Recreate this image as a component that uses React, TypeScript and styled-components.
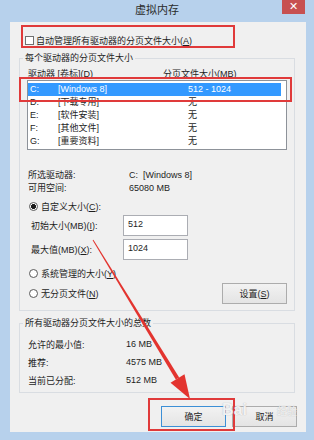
import React from 'react';
import styled, { createGlobalStyle } from 'styled-components';

const GlobalStyle = createGlobalStyle`
  html, body {
    margin: 0;
    padding: 0;
  }
  body {
    width: 314px;
    height: 440px;
    overflow: hidden;
    background: #fff;
    font-family: "Liberation Sans", "Noto Sans CJK SC", sans-serif;
    color: #1e1e1e;
  }
`;

const Window = styled.div`
  position: relative;
  width: 314px;
  height: 440px;
  box-sizing: border-box;
  background: #b7d1ec;
  display: flex;
  flex-direction: column;
  padding-bottom: 8px;
`;

const TitleBar = styled.div`
  height: 22px;
  padding: 0 9px;
  display: grid;
  grid-template-columns: 1fr auto 1fr;
  align-items: start;
`;

const Title = styled.div`
  grid-column: 2;
  font-size: 11px;
  line-height: 20px;
  color: #2b2b2b;
`;

const CloseButton = styled.div`
  grid-column: 3;
  justify-self: end;
  width: 23px;
  height: 14px;
  background: #c75050;
  color: #fff;
  font-size: 11px;
  line-height: 13px;
  text-align: center;
`;

const Client = styled.div`
  flex: 1;
  margin: 0 8px 0 10px;
  background: #f0f0f0;
  display: flex;
  flex-direction: column;
  font-size: 9px;
`;

const CheckRow = styled.div`
  display: flex;
  align-items: center;
  gap: 2px;
  height: 16px;
  margin: 10px 0 0 15px;
`;

const CheckBox = styled.span`
  width: 9px;
  height: 9px;
  box-sizing: border-box;
  border: 1px solid #707070;
  background: #fff;
`;

const Key = styled.span`
  text-decoration: underline;
`;

const Group = styled.fieldset<{ $top: number; $bottom: number }>`
  margin: ${p => p.$top}px 11px 0 9px;
  padding: 0 7px ${p => p.$bottom}px 7px;
  border: 1px solid #d9dde2;
  min-width: 0;
`;

const Legend = styled.legend`
  padding: 0 2px;
  margin-left: -4px;
  font-size: 9px;
  line-height: 12px;
`;

const Header = styled.div`
  display: grid;
  grid-template-columns: 135px 1fr;
  height: 12px;
  line-height: 12px;
  margin-top: 4px;
  padding-left: 1px;
`;

const ListBox = styled.div`
  height: 70px;
  box-sizing: border-box;
  background: #fff;
  border: 1px solid #8d9299;
  padding: 2px 0 1px;
`;

const ListRow = styled.div<{ $selected?: boolean }>`
  display: grid;
  grid-template-columns: 28px 130px 1fr;
  height: 13px;
  line-height: 13px;
  padding-left: 2px;
  margin-right: 5px;
  background: ${p => (p.$selected ? '#3399ff' : 'transparent')};
  color: ${p => (p.$selected ? '#fff' : '#1e1e1e')};
`;

const InfoGrid = styled.div<{ $col: number; $row: number; $top: number }>`
  display: grid;
  grid-template-columns: ${p => p.$col}px 1fr;
  grid-auto-rows: ${p => p.$row}px;
  align-items: center;
  margin-top: ${p => p.$top}px;
  padding-left: 1px;
`;

const RadioRow = styled.div<{ $top: number }>`
  display: flex;
  align-items: center;
  gap: 3px;
  height: 13px;
  margin-top: ${p => p.$top}px;
  padding-left: 2px;
`;

const Radio = styled.span<{ $checked?: boolean }>`
  width: 9px;
  height: 9px;
  box-sizing: border-box;
  border-radius: 50%;
  border: 1px solid #5a5a5a;
  background: ${p =>
    p.$checked ? 'radial-gradient(circle, #1a1a1a 0 2.2px, #fff 2.8px)' : '#fff'};
`;

const FieldGrid = styled.div`
  display: grid;
  grid-template-columns: 96px 65px;
  grid-auto-rows: 21px;
  row-gap: 3px;
  align-items: center;
  margin-top: 2px;
`;

const FieldLabel = styled.span`
  padding-left: 4px;
`;

const TextBox = styled.div`
  height: 21px;
  box-sizing: border-box;
  border: 1px solid #abadb3;
  background: #fff;
  padding: 3px 4px 0;
  line-height: 11px;
`;

const BottomRow = styled.div`
  display: flex;
  align-items: center;
  justify-content: space-between;
  height: 21px;
  margin-top: 3px;
`;

const Button = styled.div<{ $default?: boolean }>`
  width: 65px;
  height: 21px;
  box-sizing: border-box;
  border: 1px solid ${p => (p.$default ? '#3c8fd6' : '#acacac')};
  background: linear-gradient(#f2f2f2, #e4e4e4);
  display: flex;
  align-items: center;
  justify-content: center;
  font-size: 9px;
`;

const Footer = styled.div`
  display: flex;
  justify-content: flex-end;
  gap: 6px;
  margin: 13px 9px 0 0;
`;

const RedBox = styled.div<{ $x: number; $y: number; $w: number; $h: number }>`
  position: absolute;
  left: ${p => p.$x}px;
  top: ${p => p.$y}px;
  width: ${p => p.$w}px;
  height: ${p => p.$h}px;
  box-sizing: border-box;
  border: 2px solid #e03a3a;
  pointer-events: none;
`;

const ArrowLayer = styled.svg`
  position: absolute;
  left: 0;
  top: 0;
  pointer-events: none;
`;

const Watermark = styled.div`
  position: absolute;
  left: 222px;
  top: 401px;
  display: flex;
  align-items: baseline;
  gap: 30px;
  color: rgba(255, 255, 255, 0.85);
  text-shadow: 0 0 1px rgba(110, 110, 110, 0.55);
  pointer-events: none;
`;

const WmBig = styled.span`
  font-family: "Liberation Sans", sans-serif;
  font-size: 16px;
  font-weight: bold;
`;

const WmSmall = styled.span`
  font-family: "Noto Sans CJK SC", sans-serif;
  font-size: 10px;
`;

const drives = [
  { d: 'C:', label: '[Windows 8]', size: '512 - 1024', selected: true },
  { d: 'D:', label: '[下载专用]', size: '无' },
  { d: 'E:', label: '[软件安装]', size: '无' },
  { d: 'F:', label: '[其他文件]', size: '无' },
  { d: 'G:', label: '[重要资料]', size: '无' },
];

export default function App() {
  return (
    <>
      <GlobalStyle />
      <Window>
        <TitleBar>
          <Title>虚拟内存</Title>
          <CloseButton>✕</CloseButton>
        </TitleBar>
        <Client>
          <CheckRow>
            <CheckBox />
            <span>自动管理所有驱动器的分页文件大小(<Key>A</Key>)</span>
          </CheckRow>

          <Group $top={4} $bottom={6}>
            <Legend>每个驱动器的分页文件大小</Legend>
            <Header>
              <span>驱动器 [卷标](<Key>D</Key>)</span>
              <span>分页文件大小(MB)</span>
            </Header>
            <ListBox>
              {drives.map(r => (
                <ListRow key={r.d} $selected={r.selected}>
                  <span>{r.d}</span>
                  <span>{r.label}</span>
                  <span>{r.size}</span>
                </ListRow>
              ))}
            </ListBox>

            <InfoGrid $col={101} $row={13} $top={18}>
              <span>所选驱动器:</span>
              <span>C:&nbsp;&nbsp;[Windows 8]</span>
              <span>可用空间:</span>
              <span>65080 MB</span>
            </InfoGrid>

            <RadioRow $top={6}>
              <Radio $checked />
              <span>自定义大小(<Key>C</Key>):</span>
            </RadioRow>

            <FieldGrid>
              <FieldLabel>初始大小(MB)(<Key>I</Key>):</FieldLabel>
              <TextBox>512</TextBox>
              <FieldLabel>最大值(MB)(<Key>X</Key>):</FieldLabel>
              <TextBox>1024</TextBox>
            </FieldGrid>

            <RadioRow $top={7}>
              <Radio />
              <span>系统管理的大小(<Key>Y</Key>)</span>
            </RadioRow>

            <BottomRow>
              <RadioRow $top={0}>
                <Radio />
                <span>无分页文件(<Key>N</Key>)</span>
              </RadioRow>
              <Button>设置(<Key>S</Key>)</Button>
            </BottomRow>
          </Group>

          <Group $top={6} $bottom={3}>
            <Legend>所有驱动器分页文件大小的总数</Legend>
            <InfoGrid $col={98} $row={18} $top={6}>
              <span>允许的最小值:</span>
              <span>16 MB</span>
              <span>推荐:</span>
              <span>4575 MB</span>
              <span>当前已分配:</span>
              <span>512 MB</span>
            </InfoGrid>
          </Group>

          <Footer>
            <Button $default>确定</Button>
            <Button>取消</Button>
          </Footer>
        </Client>

        <RedBox $x={21} $y={25} $w={214} $h={23} />
        <RedBox $x={19} $y={77} $w={273} $h={25} />
        <RedBox $x={148} $y={398} $w={87} $h={33} />

        <ArrowLayer width="314" height="440" viewBox="0 0 314 440">
          <polygon
            points="92.6,240.3 93.4,239.7 179.2,377.5 175.8,379.5"
            fill="#e3342f"
          />
          <polygon points="190,399 170.5,382.8 184.5,374.2" fill="#e3342f" />
        </ArrowLayer>

        <Watermark>
          <WmBig>Bai</WmBig>
          <WmSmall>经验</WmSmall>
        </Watermark>
      </Window>
    </>
  );
}
